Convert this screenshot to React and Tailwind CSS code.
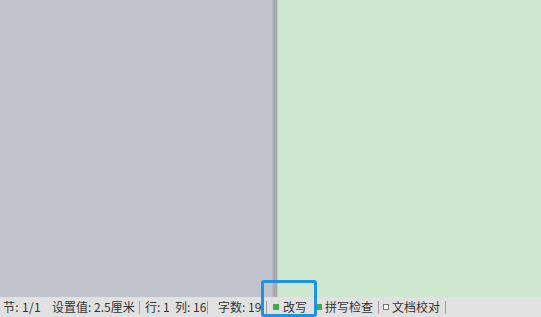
import React from 'react';

function Sep({ className = '' }) {
  return <span className={`h-[13px] w-px shrink-0 bg-[#a0a0a0] ${className}`} />;
}

function App() {
  return (
    <div className="relative flex h-[317px] w-[541px] flex-col overflow-hidden font-['Noto_Sans_CJK_SC',sans-serif]">
      {/* 文档区域 */}
      <div className="flex flex-1">
        <div className="w-[272px] bg-[#c1c4cc]" />
        <div className="w-[2px] bg-[#b1b4bb]" />
        <div className="w-[3px] bg-[#a7aab0]" />
        <div className="w-px bg-[#bccfc0]" />
        <div className="flex-1 bg-[#cde8cf]" />
      </div>

      {/* 状态栏 */}
      <div className="flex h-[20px] items-center whitespace-nowrap bg-[#e1e1e1] pl-[3px] text-[12px] leading-none text-[#333]">
        <span className="w-[38px] shrink-0 tracking-[0.3px]">节: 1/1</span>
        <span className="ml-[11px] w-[82px] shrink-0">设置值: 2.5厘米</span>
        <Sep className="ml-[5px]" />
        <span className="ml-[5px] w-[24px] shrink-0">行: 1</span>
        <span className="ml-[6px] w-[28px] shrink-0">列: 16</span>
        <Sep className="ml-[4px]" />
        <span className="ml-[10px] w-[44px] shrink-0">字数: 19</span>
        <Sep className="ml-[4px]" />
        <span className="ml-[6px] h-[6px] w-[6px] shrink-0 bg-[#3cb043]" />
        <span className="ml-[4px] w-[25px] shrink-0">改写</span>
        <span className="ml-[8px] h-[6px] w-[6px] shrink-0 bg-[#3cb043]" />
        <span className="ml-[3px] w-[48px] shrink-0">拼写检查</span>
        <Sep className="ml-[5px]" />
        <span className="ml-[4px] h-[6px] w-[6px] shrink-0 border border-[#777] bg-white" />
        <span className="ml-[3px] w-[48px] shrink-0">文档校对</span>
        <Sep className="ml-[5px]" />
      </div>

      {/* 高亮框 */}
      <div className="absolute left-[261px] top-[280px] h-[37px] w-[56px] rounded-[3px] border-[3px] border-[#1e93e6]" />
    </div>
  );
}

export default App;
